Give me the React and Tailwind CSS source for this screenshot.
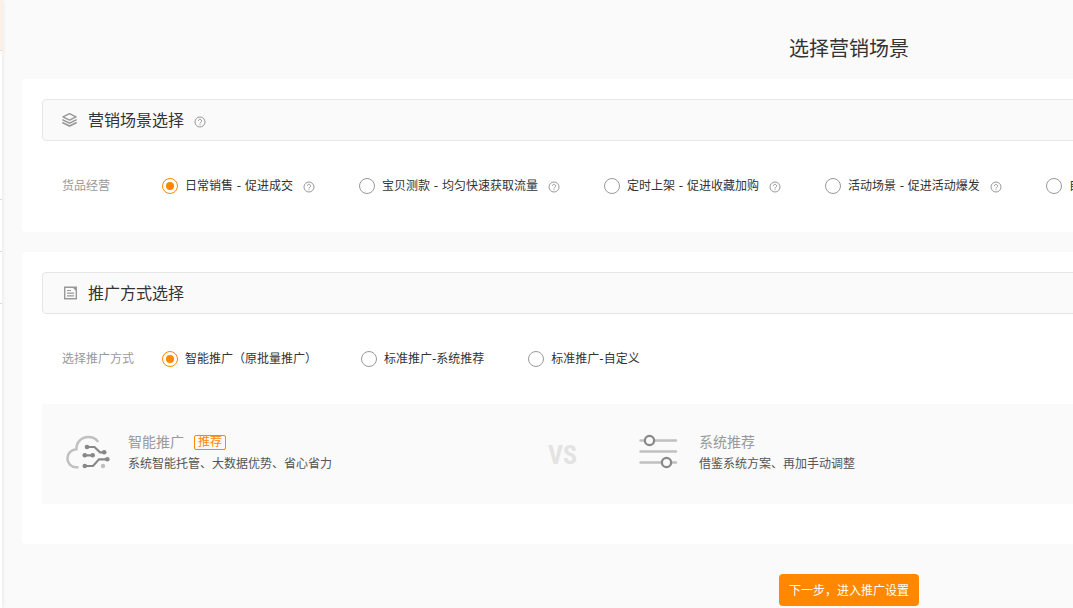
import React from "react";

const scenes = [
  "日常销售 - 促进成交",
  "宝贝测款 - 均匀快速获取流量",
  "定时上架 - 促进收藏加购",
  "活动场景 - 促进活动爆发",
  "自定义场景",
];

const modes = ["智能推广（原批量推广）", "标准推广-系统推荐", "标准推广-自定义"];

function HelpButton() {
  return (
    <button type="button" aria-label="帮助" className="mt-0.5 block text-[#999]">
      <svg className="size-3" viewBox="0 0 12 12" fill="none" stroke="currentColor">
        <circle cx="6" cy="6" r="5" />
        <path d="M4.4 4.9a1.6 1.6 0 1 1 2.4 1.4c-.6.3-.8.5-.8 1.1M6 8.2v1" />
      </svg>
    </button>
  );
}

function LayersIcon() {
  return (
    <svg className="size-4 text-[#999]" viewBox="0 0 16 16" fill="none" stroke="currentColor">
      <path d="M7.500 1.700 14 4.900 7.500 8.100 1 4.900Z" strokeWidth="1.500" strokeLinejoin="round" />
      <path d="M.3 7.600 7.500 11.100l7.200-3.500M.3 10.500 7.500 14l7.200-3.500" strokeWidth="1.600" />
    </svg>
  );
}

function DocumentIcon() {
  return (
    <svg className="size-4 text-[#999]" viewBox="0 0 16 16" fill="none" stroke="currentColor">
      <path d="M2.700 2.200h11.600v11.600H2.700Z" strokeWidth="1.400" />
      <path d="M5 5.500h4M5 8.200h7M5 10.800h7" strokeWidth="1.200" />
      <path d="M10.300 2.200h4v4Z" fill="currentColor" stroke="none" />
    </svg>
  );
}

function CloudIcon() {
  return (
    <svg className="h-9 w-11 shrink-0 overflow-visible" viewBox="0 0 44 36" fill="none">
      <path
        d="M12.500 31.200H10A8.800 8.800 0 0 1 1.400 22.300c0-4.800 3.700-8.700 9-9C10.300 6 15.500 1 22.300 1c4.200 0 7.700 1.800 9.900 4.900"
        stroke="#c0c0c0"
        strokeWidth="2.500"
      />
      <path
        d="M21 11h7.500l5.500 5.300h4M19 19.300h7.500M19 30h8l6-6.700h8"
        stroke="#888"
        strokeWidth="2.200"
      />
      <g fill="#888">
        <circle cx="21" cy="11" r="2.300" />
        <circle cx="38.200" cy="16.300" r="2.300" />
        <circle cx="18.800" cy="19.300" r="2.300" />
        <circle cx="26.700" cy="19.300" r="2.300" />
        <circle cx="18.800" cy="30" r="2.300" />
        <circle cx="41.300" cy="23.300" r="2.300" />
      </g>
      <circle cx="37" cy="30" r="2.200" fill="#c0c0c0" />
    </svg>
  );
}

function SlidersIcon() {
  return (
    <svg className="h-10 w-[42px] shrink-0" viewBox="0 0 42 40" fill="none">
      <path d="M1.500 6.500h35.500M1.500 17.500h35.500M1.500 28.500h35.500" stroke="#c0c0c0" strokeWidth="2.400" strokeLinecap="round" />
      <g fill="#fafafa" stroke="#888" strokeWidth="2.200">
        <circle cx="10.500" cy="6.500" r="4.600" />
        <circle cx="27.500" cy="28.500" r="4.600" />
      </g>
    </svg>
  );
}

function SectionHeader({ icon, title, children }) {
  return (
    <header className="flex h-[42px] items-center rounded border border-[#e6e6e6] bg-[#fafafa] pl-[19px]">
      {icon}
      <h2 className="ml-2.5 pt-0.5 text-base text-[#333]">{title}</h2>
      {children}
    </header>
  );
}

function RadioRow({ legend, name, options, help }) {
  return (
    <div role="radiogroup" aria-label={legend} className="flex h-[90px] items-center pl-5 text-xs">
      <span className="w-[100px] shrink-0 text-[#999]">{legend}</span>
      <div className="flex gap-11">
        {options.map((label, i) => (
          <div key={label} className="flex items-center gap-2.5">
            <label className="flex items-center gap-[7px] whitespace-nowrap text-[#333]">
              <input
                type="radio"
                name={name}
                defaultChecked={i === 0}
                className="size-4 appearance-none rounded-full border border-[#999] bg-clip-content p-[3px] checked:border-[#ff8800] checked:bg-[#ff8800]"
              />
              {label}
            </label>
            {help && <HelpButton />}
          </div>
        ))}
      </div>
    </div>
  );
}

function Choice({ icon, title, badge, text }) {
  return (
    <div className="flex items-center">
      {icon}
      <div className="ml-[18px] pb-0.5">
        <h3 className="flex items-center gap-2.5 text-sm leading-[22px] text-[#999]">
          {title}
          {badge && (
            <span className="rounded-xs border border-[#ff8800] px-[3px] text-xs leading-[13px] text-[#ff8800]">
              {badge}
            </span>
          )}
        </h3>
        <p className="text-xs leading-[22px] text-[#555]">{text}</p>
      </div>
    </div>
  );
}

export default function App() {
  return (
    <div className="flex min-h-screen overflow-hidden bg-[#fafafa] font-['DejaVu_Sans','Noto_Sans_CJK_SC',sans-serif]">
      <aside className="z-10 w-[2px] shrink-0 divide-y divide-[#ddd] bg-white shadow-[0_0_4px_rgba(0,0,0,0.15)]">
        <div className="h-[51px] bg-[#fff0e5]" />
        <div className="h-[149px]" />
        <div className="h-[52px]" />
        <div className="h-[52px]" />
        <div className="h-[52px]" />
      </aside>
      <main className="min-w-[1674px] shrink-0 pl-5">
        <h1 className="pt-[34px] pb-[15px] text-center text-xl leading-[30px] text-[#333]">选择营销场景</h1>
        <section className="rounded bg-white px-5 pt-5 pb-px">
          <SectionHeader icon={<LayersIcon />} title="营销场景选择">
            <span className="ml-2.5 pt-0.5">
              <HelpButton />
            </span>
          </SectionHeader>
          <RadioRow legend="货品经营" name="scene" options={scenes} help />
        </section>
        <section className="mt-5 rounded bg-white px-5 pt-5 pb-10">
          <SectionHeader icon={<DocumentIcon />} title="推广方式选择" />
          <RadioRow legend="选择推广方式" name="mode" options={modes} />
          <div className="flex h-[100px] items-center bg-[#fafafa] pl-6">
            <div className="w-[482px]">
              <Choice icon={<CloudIcon />} title="智能推广" badge="推荐" text="系统智能托管、大数据优势、省心省力" />
            </div>
            <span className="w-[91px] pt-0.5 font-['Liberation_Sans_Narrow','Roboto_Condensed','Open_Sans_Condensed','Roboto',sans-serif] text-[26px] font-bold text-[#e3e3e3]">
              VS
            </span>
            <Choice icon={<SlidersIcon />} title="系统推荐" text="借鉴系统方案、再加手动调整" />
          </div>
        </section>
        <div className="flex justify-center pt-[30px]">
          <button type="button" className="h-8 rounded bg-[#ff8800] px-2.5 pt-0.5 text-xs text-white">
            下一步，进入推广设置
          </button>
        </div>
      </main>
    </div>
  );
}
